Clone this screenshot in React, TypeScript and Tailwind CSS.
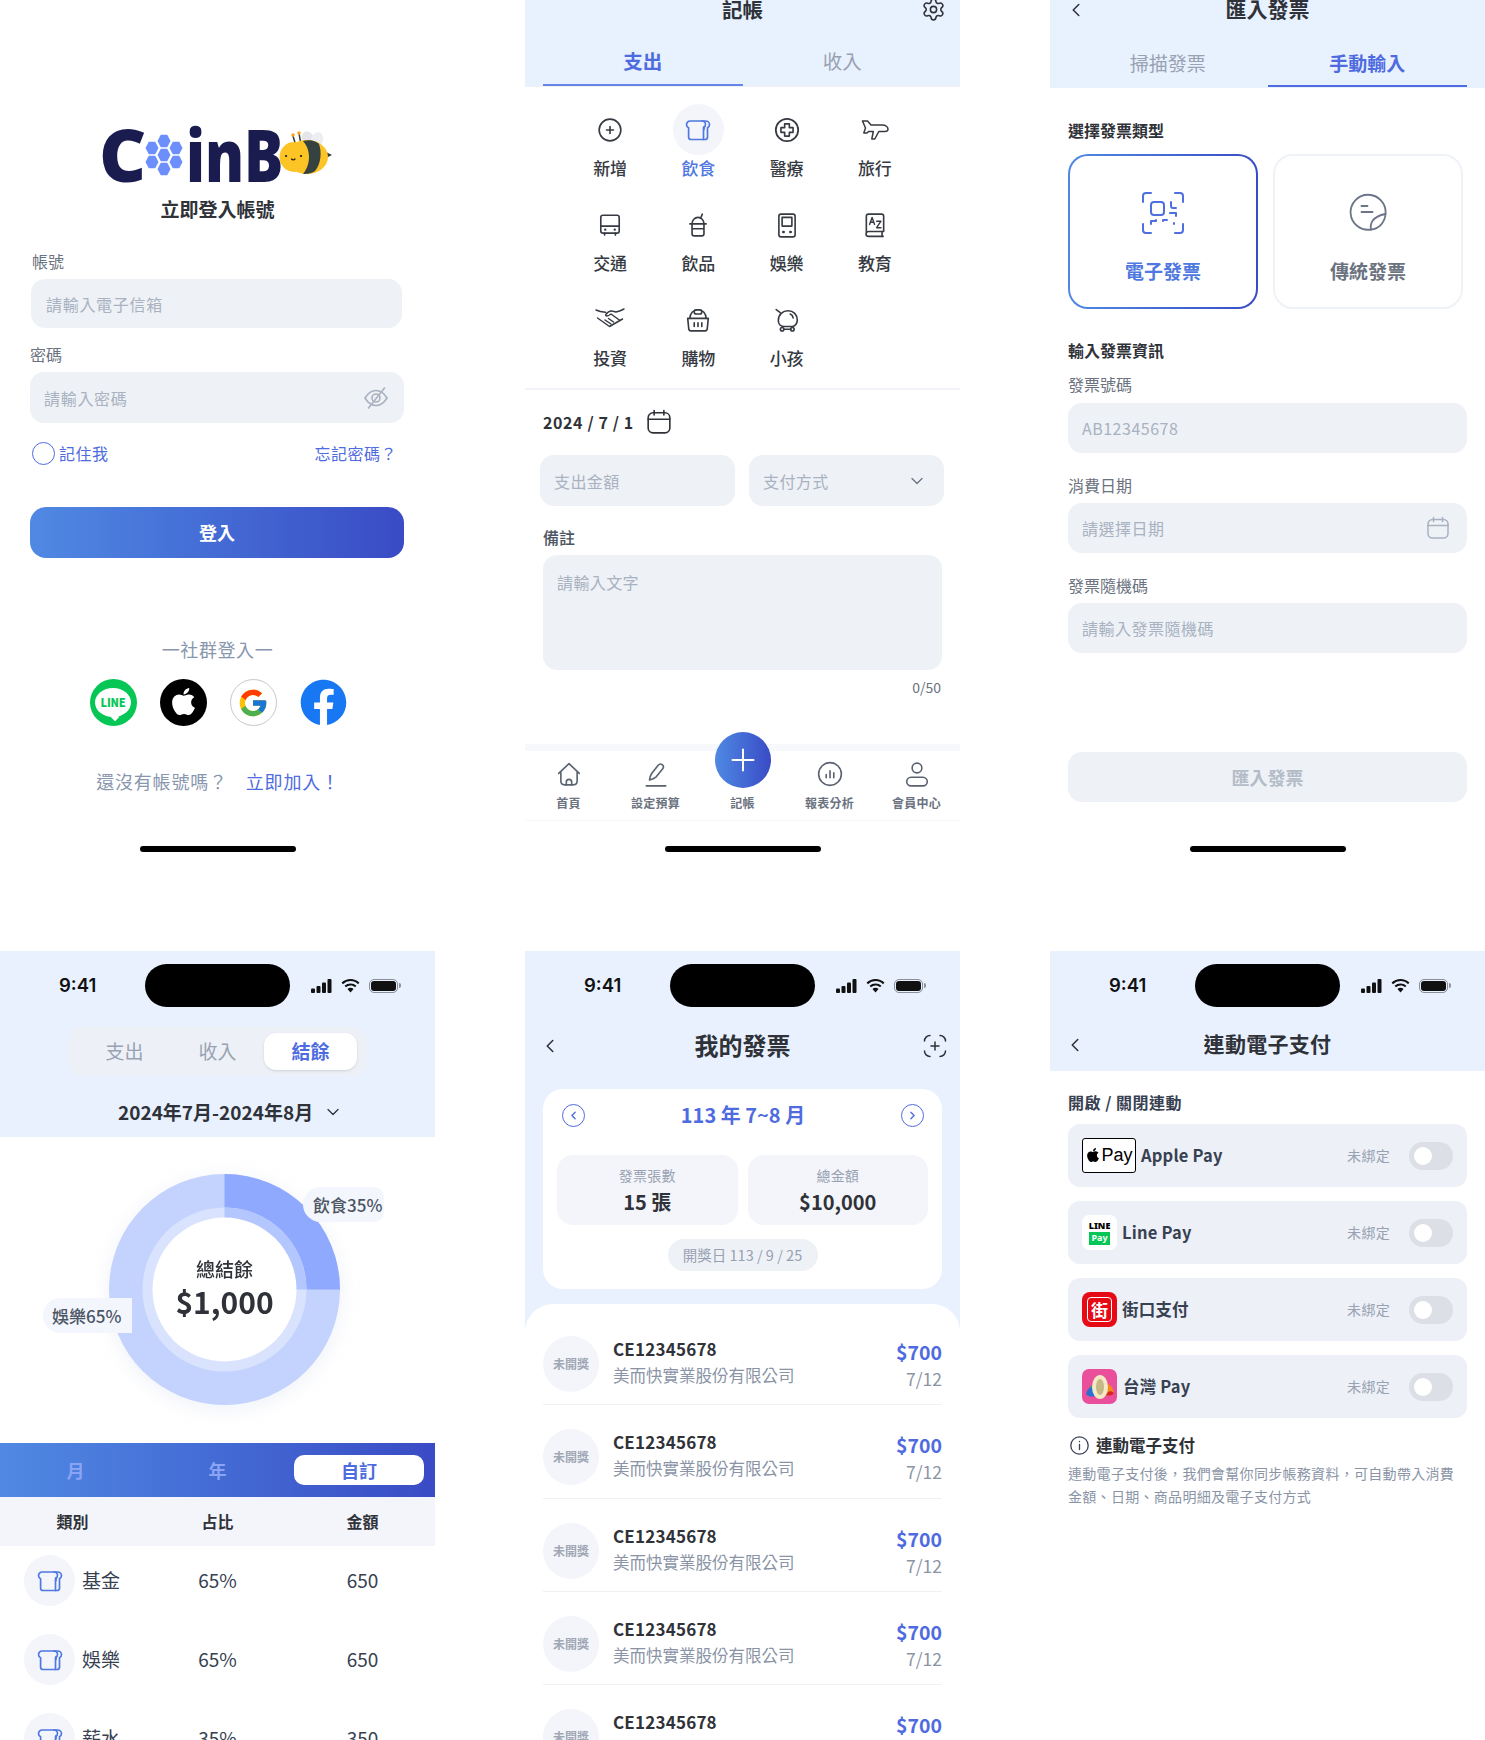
import React from 'react';
import { ChevronDown, ChevronLeft, ChevronRight, Settings } from 'lucide-react';
import { FaApple, FaFacebook } from 'react-icons/fa';
import { FcGoogle } from 'react-icons/fc';

type IconProps = { className?: string };

const Stroke = ({ size = 24, children, className }: { size?: number; children: React.ReactNode; className?: string }) => (
  <svg width={size} height={size} viewBox="0 0 24 24" fill="none" stroke="currentColor" strokeWidth="1.5" strokeLinecap="round" strokeLinejoin="round" className={className}>
    {children}
  </svg>
);

const Bread = ({ className }: IconProps) => (
  <svg width="26" height="24" viewBox="0 0 26 24" fill="none" stroke="currentColor" strokeWidth="1.7" strokeLinecap="round" strokeLinejoin="round" className={className}>
    <path d="M6 21.5h12.5V9.8c1.3-.6 2-1.8 2-3.2 0-2-1.5-3.6-3.6-3.6H5.2C3 3 1.5 4.6 1.5 6.6c0 1.4.8 2.6 2.1 3.2V19c0 1.5 1 2.5 2.4 2.5z" />
    <path d="M16.9 3h3.7c2.2 0 3.9 1.6 3.9 3.6 0 1.4-.8 2.6-2 3.2V19c0 1.5-1 2.5-2.4 2.5h-1.6" />
    <path d="M19 8.5v3" />
  </svg>
);

const categoryIcons: Record<string, React.ReactNode> = {
  新增: (
    <Stroke size={26}>
      <circle cx="12" cy="12" r="10" />
      <path d="M12 8.8v6.4M8.8 12h6.4" />
    </Stroke>
  ),
  飲食: <Bread />,
  醫療: (
    <Stroke size={28}>
      <circle cx="12" cy="12" r="9.6" />
      <path d="M10 6.8h4v3.2h3.2v4H14v3.2h-4V14H6.8v-4H10z" strokeWidth="1.4" />
    </Stroke>
  ),
  旅行: (
    <svg width="28" height="22" viewBox="0 0 28 22" fill="none" stroke="currentColor" strokeWidth="1.5" strokeLinejoin="round">
      <path d="M1.5 2h5l3.5 4h11.5c3 0 5.5 2 5.5 4.2 0 1.600-1.400 2.300-3.200 2.300h-6l-4 7.500h-3l1.500-7.500H7.500L6 14H2.800L4.500 9z" />
    </svg>
  ),
  交通: (
    <Stroke size={26}>
      <rect x="3.5" y="3" width="17" height="16.5" rx="2" />
      <path d="M3.500 13h17M7 19.500v1.800M17 19.500v1.800" />
      <path d="M7.500 16.300h.2M16.300 16.300h.2" strokeWidth="2" />
    </Stroke>
  ),
  飲品: (
    <Stroke size={26}>
      <path d="M14.500 5.500 16 2M6.500 11c0-3.500 2.500-6 5.500-6s5.500 2.500 5.500 6M4.500 11h15M6.500 11v9c0 1 .8 2 2 2h7c1.200 0 2-1 2-2v-9M6.500 15.500h11" />
    </Stroke>
  ),
  娛樂: (
    <Stroke size={26}>
      <rect x="4.500" y="2" width="15" height="21" rx="2" />
      <rect x="7.500" y="5" width="9" height="8" />
      <path d="M8.500 18.500h.5M15 18.500h.5" strokeWidth="2.200" />
    </Stroke>
  ),
  教育: (
    <svg width="26" height="26" viewBox="0 0 24 24" fill="none" stroke="currentColor" strokeWidth="1.500" strokeLinecap="round" strokeLinejoin="round">
      <path d="M4 19.500V4a2 2 0 0 1 2-2h12a2 2 0 0 1 2 2v14H6a2 2 0 0 0 0 4.500h13.500" />
      <path d="M7 11.500l2.300-6.500 2.300 6.500M8 9.500h2.600M13.500 8.500h4l-4 6h4" strokeWidth="1.300" />
      <path d="M18.500 18v4.500" />
    </svg>
  ),
  投資: (
    <svg width="30" height="26" viewBox="0 0 30 26" fill="none" stroke="currentColor" strokeWidth="1.500" strokeLinecap="round" strokeLinejoin="round">
      <path d="M1 3c3 1.500 6 2 9.500 2.200M29 2c-3 1.500-5.500 2.500-8 3l-3-.8c-2.500-.8-5 .3-7 3-.6 1-.2 1.800 1 1.800 1.300 0 2.700-1 4-2l9 6.500" />
      <path d="M2.500 11l12 8.500L27.500 12" />
      <path d="M10 13l6 4M13.500 11.500l5 3.500" />
    </svg>
  ),
  購物: (
    <svg width="26" height="26" viewBox="0 0 24 24" fill="none" stroke="currentColor" strokeWidth="1.500" strokeLinecap="round" strokeLinejoin="round">
      <path d="M2.500 10.500h19l-1 10a2 2 0 0 1-2 1.500h-13a2 2 0 0 1-2-1.500z" />
      <path d="M4.500 10.500C4.500 6 7.500 2.500 12 2.500s7.500 3.500 7.500 8" />
      <rect x="8.500" y="2.500" width="7" height="4" rx="2" />
      <path d="M8.500 14.500v3.500M12 14.500v3.500M15.500 14.500v3.500" />
    </svg>
  ),
  小孩: (
    <svg width="26" height="26" viewBox="0 0 24 24" fill="none" stroke="currentColor" strokeWidth="1.500" strokeLinecap="round" strokeLinejoin="round">
      <path d="M2 2.500l3.500 2.500M4 12.500C4 7 8 3.500 13 3.500s8.500 3.500 8.500 8.500c0 3-2 6-4.800 6H9c-3 0-5-2.500-5-5.500z" />
      <path d="M15 6.500c1.500.6 2.500 2 2.700 3.500" />
      <circle cx="7.500" cy="20.500" r="1.600" />
      <circle cx="17" cy="20.500" r="1.600" />
      <path d="M9 20.500h6.500" />
    </svg>
  ),
};

const categories = ['新增', '飲食', '醫療', '旅行', '交通', '飲品', '娛樂', '教育', '投資', '購物', '小孩'];

const HomeBar = () => <div className="mt-auto mb-[9px] mx-auto h-[6px] w-[156px] shrink-0 rounded-full bg-black" />;

const CalendarIcon = ({ className, size = 24 }: IconProps & { size?: number }) => (
  <svg width={size} height={size} viewBox="0 0 24 24" fill="none" stroke="currentColor" strokeWidth="1.500" strokeLinecap="round" strokeLinejoin="round" className={className}>
    <rect x="2" y="3.500" width="20" height="18.500" rx="4.500" />
    <path d="M2 9.500h20M7.500 1.500v4M16.500 1.500v4" />
  </svg>
);

const StatusBar = () => (
  <div className="flex h-[56px] shrink-0 items-start pt-[13px] pl-[59px]">
    <span className="flex h-[43px] w-[86px] items-center font-['Inter',sans-serif] text-[18.500px] font-semibold text-[#111]">9:41</span>
    <div className="h-[43px] w-[145px] rounded-full bg-black" />
    <div className="ml-[21px] flex h-[43px] items-center gap-[8px]">
      <svg width="21" height="14" viewBox="0 0 21 14" fill="#111">
        <rect x="0" y="9.500" width="4" height="4.500" rx="1" />
        <rect x="5.500" y="7" width="4" height="7" rx="1" />
        <rect x="11" y="3.500" width="4" height="10.500" rx="1" />
        <rect x="16.500" y="0" width="4" height="14" rx="1" />
      </svg>
      <svg width="21" height="15" viewBox="0 0 20 14" fill="#111">
        <path d="M10 2.800c2.800 0 5.300 1.100 7.200 2.900l1.300-1.500A12.300 12.300 0 0 0 10 .8 12.300 12.300 0 0 0 1.500 4.200l1.300 1.500A10.400 10.400 0 0 1 10 2.800z" />
        <path d="M10 7c1.700 0 3.200.6 4.300 1.700l1.400-1.500A8.300 8.300 0 0 0 10 5a8.300 8.300 0 0 0-5.700 2.200l1.400 1.500A6.300 6.300 0 0 1 10 7z" />
        <path d="M10 9.200c-1.100 0-2.100.4-2.900 1.100L10 13.600l2.900-3.300c-.8-.7-1.800-1.100-2.900-1.100z" />
      </svg>
      <div className="flex items-center">
        <div className="flex h-[14px] w-[29px] items-center justify-center rounded-[5px] border border-[#8a8f98]">
          <div className="h-[10px] w-[25px] rounded-[3px] bg-[#111]" />
        </div>
        <div className="ml-px h-[5px] w-[1.500px] rounded-r bg-[#8a8f98]" />
      </div>
    </div>
  </div>
);

const Logo = () => (
  <div className="flex h-[57px] items-center pl-[99px] font-['Noto_Sans',sans-serif] text-[73px] leading-none font-black text-[#1a1c50]">
    <span className="w-[44px] shrink-0">C</span>
    <svg width="42" height="42" viewBox="0 0 42 42" fill="#6d8ffb" className="mt-[3px] shrink-0">
      {[
        [21, 7],
        [21, 21],
        [21, 35],
        [9, 14],
        [33, 14],
        [9, 28],
        [33, 28],
      ].map(([x, y]) => (
        <polygon key={`${x}-${y}`} points={`${x - 6.500},${y} ${x - 3.250},${y - 6.300} ${x + 3.250},${y - 6.300} ${x + 6.500},${y} ${x + 3.250},${y + 6.300} ${x - 3.250},${y + 6.300}`} />
      ))}
    </svg>
    <span className="ml-[1px] w-[95px] shrink-0 origin-left scale-x-[.8]">inB</span>
    <svg width="54" height="46" viewBox="0 0 54 46" className="mt-[-2px] -ml-[2px] shrink-0">
      <ellipse cx="29" cy="9" rx="6" ry="8" fill="#e4e6ea" transform="rotate(-25 29 9)" />
      <ellipse cx="38" cy="10" rx="6" ry="8" fill="#eceef1" transform="rotate(20 38 10)" />
      <path d="M14 6l3 10M20 3l2 12" stroke="#2f3a3a" strokeWidth="1.500" />
      <circle cx="14" cy="5" r="1.800" fill="#f5a623" />
      <circle cx="20" cy="3" r="1.800" fill="#f5a623" />
      <path d="M47 22l6 3-6 3z" fill="#2f3a3a" />
      <ellipse cx="28" cy="27" rx="21" ry="17" fill="#fdc426" />
      <path d="M24 11c8-2 14 1 16 3 3 8 2 20-4 27-4 3-10 3-12 3 7-8 9-23 0-33z" fill="#364240" />
      <ellipse cx="15" cy="27" rx="14.500" ry="15" fill="#fdc426" />
      <path d="M7 26h.1M22 26h.1" stroke="#222" strokeWidth="2.200" strokeLinecap="round" />
      <path d="M12.500 29c1 1.200 2.500 1.200 3.500 0" stroke="#222" strokeWidth="1.200" fill="none" strokeLinecap="round" />
    </svg>
  </div>
);

const LoginScreen = () => (
  <section className="flex h-[861px] flex-col bg-white pt-[125px]">
    <Logo />
    <h1 className="mt-[13px] h-[28px] text-center text-[19px] leading-[28px] font-bold text-[#2f3238]">立即登入帳號</h1>
    <label className="mt-[26px] ml-[32px] h-[24px] text-[16px] leading-[24px] text-[#6b7280]">帳號</label>
    <div className="mt-[6px] ml-[31px] flex h-[49px] w-[371px] items-center rounded-[14px] bg-[#eef1f6] pl-[15px] text-[16px] tracking-[.7px] text-[#a8b2c1]">請輸入電子信箱</div>
    <label className="mt-[14px] ml-[30px] h-[24px] text-[16px] leading-[24px] text-[#6b7280]">密碼</label>
    <div className="mt-[6px] ml-[30px] flex h-[51px] w-[374px] items-center justify-between rounded-[14px] bg-[#eef1f6] pr-[16px] pl-[14px] text-[16px] tracking-[.7px] text-[#a8b2c1]">
      <span>請輸入密碼</span>
      <svg width="24" height="22" viewBox="0 0 24 22" fill="none" stroke="#a8b2c1" strokeWidth="1.600" strokeLinecap="round">
        <path d="M1 11c3-5 6.500-7.500 11-7.500S20 6 23 11c-3 5-6.500 7.500-11 7.500S4 16 1 11z" />
        <circle cx="12" cy="11" r="4" />
        <path d="M20.500 1 4.500 21" />
      </svg>
    </div>
    <div className="mt-[18px] flex h-[24px] items-center justify-between pr-[38px] pl-[32px] text-[16px] tracking-[.5px] text-[#4f6be0]">
      <div className="flex items-center gap-[4px]">
        <span className="h-[23px] w-[23px] rounded-full border-[1.500px] border-[#4f6be0]" />
        <span>記住我</span>
      </div>
      <span>忘記密碼？</span>
    </div>
    <button className="mt-[42px] ml-[30px] h-[51px] w-[374px] shrink-0 rounded-[16px] bg-linear-to-r from-[#5089e3] to-[#3a4bc5] text-[18px] font-bold text-white">登入</button>
    <p className="mt-[78px] h-[26px] text-center text-[18px] leading-[26px] tracking-[.6px] text-[#8896ae]">一社群登入一</p>
    <div className="mt-[17px] flex justify-center gap-[23px] pl-[1px]">
      <div className="flex h-[47px] w-[47px] items-center justify-center rounded-full bg-[#06c755]">
        <div className="relative flex h-[29px] w-[36px] items-center justify-center rounded-[50%] bg-white text-[11px] font-black tracking-[-.2px] text-[#06c755]">
          LINE
          <div className="absolute -bottom-[3px] left-[17px] h-[6px] w-[6px] rotate-45 bg-white" />
        </div>
      </div>
      <div className="flex h-[47px] w-[47px] items-center justify-center rounded-full bg-black">
        <FaApple size={31} color="#fff" className="-mt-[3px]" />
      </div>
      <div className="flex h-[47px] w-[47px] items-center justify-center rounded-full border border-[#c8c8c8] bg-white">
        <FcGoogle size={32} />
      </div>
      <div className="flex h-[47px] w-[47px] items-center justify-center rounded-full bg-white">
        <FaFacebook size={47} color="#1877f2" />
      </div>
    </div>
    <p className="mt-[42px] flex h-[26px] justify-center gap-[18px] pl-[1px] text-[18px] leading-[26px] tracking-[.8px]">
      <span className="text-[#8896ae]">還沒有帳號嗎？</span>
      <span className="text-[#4f6be0]">立即加入！</span>
    </p>
    <HomeBar />
  </section>
);

const tabItems = [
  {
    label: '首頁',
    icon: (
      <Stroke size={26}>
        <path d="M2.500 11.500 12 2.500l9.500 9M4.500 10v8.500c0 2 1.500 3.500 3.500 3.500h8c2 0 3.500-1.500 3.500-3.500V10" />
        <path d="M9.500 22v-2.500a2.500 2.500 0 0 1 5 0V22" />
      </Stroke>
    ),
  },
  {
    label: '設定預算',
    icon: (
      <Stroke size={26}>
        <path d="M6 17.500c.3-2.500 1-4.500 2-6l6-7.500c1-1.200 2.500-1.500 3.700-.6 1.300 1 1.400 2.500.5 3.700l-6 7.500c-1.500 1.200-3.500 2.200-6.200 2.900z" />
        <path d="M3 23h18" />
      </Stroke>
    ),
  },
  { label: '記帳', icon: <div className="h-[26px]" /> },
  {
    label: '報表分析',
    icon: (
      <Stroke size={26}>
        <circle cx="12" cy="12" r="10.500" />
        <path d="M8.500 12.500v3M12 9v6.500M15.500 11v4.500" />
      </Stroke>
    ),
  },
  {
    label: '會員中心',
    icon: (
      <Stroke size={26}>
        <circle cx="12" cy="6.500" r="4.500" />
        <rect x="2.500" y="15" width="19" height="8" rx="4" />
      </Stroke>
    ),
  },
];

const BookkeepScreen = () => (
  <section className="flex h-[861px] flex-col bg-white">
    <header className="flex h-[87px] shrink-0 flex-col justify-between border-b border-[#eef1f8] bg-[#e8f1fe] px-[18px]">
      <div className="relative -mt-[5px] h-[28px] text-center text-[20.500px] leading-[28px] font-bold text-[#2f3238]">
        記帳
        <Settings size={25} strokeWidth={1.500} className="absolute top-[2px] right-[-4px]" />
      </div>
      <div className="grid h-[44px] w-[399px] grid-cols-2 text-center text-[19.500px] leading-[38px]">
        <span className="h-[44px] border-b-2 border-[#6584e6] font-bold text-[#4f6be0]">支出</span>
        <span className="text-[#98a2b3]">收入</span>
      </div>
    </header>
    <div className="grid grid-cols-4 gap-y-[18px] border-b-2 border-[#f1f3f8] px-[41px] pt-[17px] pb-[17px]">
      {categories.map((name) => {
        const active = name === '飲食';
        return (
          <div key={name} className="flex flex-col items-center">
            <div className={`flex h-[51px] w-[51px] items-center justify-center rounded-full ${active ? 'bg-[#f3f5fa] text-[#4f78e0]' : 'text-[#363a42]'}`}>{categoryIcons[name]}</div>
            <span className={`mt-[1px] h-[25px] text-[17px] leading-[24px] font-medium ${active ? 'text-[#4f78e0]' : 'text-[#363a42]'}`}>{name}</span>
          </div>
        );
      })}
    </div>
    <div className="mt-[20px] flex h-[24px] items-center gap-[12px] pl-[18px] text-[16px] font-bold tracking-[.6px] text-[#2f3238]">
      <span>2024 / 7 / 1</span>
      <CalendarIcon size={26} />
    </div>
    <div className="mt-[21px] ml-[15px] flex gap-[14px] text-[16px] tracking-[.4px] text-[#a8b2c1]">
      <div className="flex h-[51px] w-[195px] items-center rounded-[14px] bg-[#eef1f6] pl-[14px]">支出金額</div>
      <div className="flex h-[51px] w-[195px] items-center justify-between rounded-[14px] bg-[#eef1f6] pr-[17px] pl-[14px]">
        <span>支付方式</span>
        <ChevronDown size={20} strokeWidth={1.500} className="text-[#6b7280]" />
      </div>
    </div>
    <label className="mt-[19px] ml-[18px] h-[24px] text-[16px] leading-[24px] font-medium text-[#4b5563]">備註</label>
    <div className="mt-[6px] ml-[18px] h-[115px] w-[399px] rounded-[14px] bg-[#eef1f6] pt-[15px] pl-[14px] text-[16px] leading-[24px] tracking-[.4px] text-[#a8b2c1]">請輸入文字</div>
    <p className="mt-[7px] h-[20px] pr-[19px] text-right text-[14px] leading-[20px] text-[#6b7280]">0/50</p>
    <div className="mt-[47px] h-[7px] shrink-0 bg-[#f7f8fb]" />
    <nav className="relative grid h-[70px] shrink-0 grid-cols-5 border-b border-[#f7f8fb] bg-white pt-[10px]">
      {tabItems.map(({ label, icon }) => (
        <div key={label} className="flex flex-col items-center text-[#5b6270]">
          <div className="flex h-[26px] items-center">{icon}</div>
          <span className="mt-[8px] h-[16px] text-[12px] leading-[16px] font-bold tracking-[.3px] text-[#6b7280]">{label}</span>
        </div>
      ))}
      <div className="absolute -top-[19px] left-[190px] flex h-[56px] w-[56px] items-center justify-center rounded-full bg-linear-to-r from-[#5089e3] to-[#3a4bc5]">
        <svg width="24" height="24" viewBox="0 0 24 24" stroke="#fff" strokeWidth="2" strokeLinecap="round">
          <path d="M12 1.500v21M1.500 12h21" />
        </svg>
      </div>
    </nav>
    <HomeBar />
  </section>
);

const InvoiceField = ({ label, placeholder, calendar }: { label: string; placeholder: string; calendar?: boolean }) => (
  <>
    <label className="mt-[20px] ml-[18px] h-[24px] text-[16px] leading-[24px] text-[#6b7280]">{label}</label>
    <div className="mt-[6px] ml-[18px] flex h-[50px] w-[399px] items-center justify-between rounded-[14px] bg-[#eef1f6] pr-[17px] pl-[14px] text-[16px] tracking-[.5px] text-[#a8b2c1]">
      <span>{placeholder}</span>
      {calendar && <CalendarIcon className="text-[#a8b2c1]" />}
    </div>
  </>
);

const ImportScreen = () => (
  <section className="flex h-[861px] flex-col bg-white">
    <header className="flex h-[88px] shrink-0 flex-col justify-between bg-[#e8f1fe] pl-[18px]">
      <div className="relative -mt-[8px] h-[32px] pr-[18px] text-center text-[21px] leading-[32px] font-bold text-[#2f3238]">
        匯入發票
        <ChevronLeft size={22} strokeWidth={1.700} className="absolute top-[7px] -left-[3px] text-[#2f3238]" />
      </div>
      <div className="grid h-[44px] w-[399px] grid-cols-2 text-center text-[19px] leading-[38px]">
        <span className="text-[#98a2b3]">掃描發票</span>
        <span className="h-[43px] border-b-2 border-[#4f6be0] font-bold text-[#4f6be0]">手動輸入</span>
      </div>
    </header>
    <h2 className="mt-[30px] ml-[18px] h-[24px] text-[16px] leading-[24px] font-bold text-[#2f3238]">選擇發票類型</h2>
    <div className="mt-[12px] ml-[18px] flex gap-[15px]">
      <div className="h-[155px] w-[190px] rounded-[20px] bg-linear-to-r from-[#5089e3] to-[#3a4bc5] p-[2px]">
        <div className="flex h-full flex-col items-center rounded-[18px] bg-white pt-[35px] text-[#4f6fe0]">
          <svg width="44" height="44" viewBox="0 0 44 44" fill="none" stroke="currentColor" strokeWidth="2" strokeLinecap="round" strokeLinejoin="round">
            <path d="M2 11V5a3 3 0 0 1 3-3h5M34 2h5a3 3 0 0 1 3 3v6M42 33v6a3 3 0 0 1-3 3h-5M10 42H5a3 3 0 0 1-3-3v-6" />
            <rect x="10" y="11" width="13" height="13" rx="3" />
            <path d="M30 11v4a2 2 0 0 0 2 2h3M29 22h6v3M10 33v-3h5l0-1M22 30v-1h4M33 33v-1" />
          </svg>
          <span className="mt-[23px] text-[19px] leading-[26px] font-bold text-[#4f78e0]">電子發票</span>
        </div>
      </div>
      <div className="flex h-[155px] w-[190px] flex-col items-center rounded-[20px] border-2 border-[#eff2f7] bg-white pt-[37px] text-[#6b7488]">
        <svg width="38" height="38" viewBox="0 0 38 38" fill="none" stroke="currentColor" strokeWidth="1.800" strokeLinecap="round" strokeLinejoin="round">
          <path d="M22 36.500A17.500 17.500 0 1 1 36.500 21C36 29 30 36 22 36.500z" />
          <path d="M22 36.500c-1-5 .5-13 14.500-15.500M12.500 13h6M12.500 19h11" />
        </svg>
        <span className="mt-[27px] text-[19px] leading-[26px] font-bold text-[#6b7280]">傳統發票</span>
      </div>
    </div>
    <h2 className="mt-[29px] ml-[18px] h-[24px] text-[16px] leading-[24px] font-bold text-[#2f3238]">輸入發票資訊</h2>
    <label className="mt-[10px] ml-[18px] h-[24px] text-[16px] leading-[24px] text-[#6b7280]">發票號碼</label>
    <div className="mt-[7px] ml-[18px] flex h-[50px] w-[399px] items-center rounded-[14px] bg-[#eef1f6] pl-[14px] text-[16px] tracking-[.5px] text-[#a8b2c1]">AB12345678</div>
    <InvoiceField label="消費日期" placeholder="請選擇日期" calendar />
    <InvoiceField label="發票隨機碼" placeholder="請輸入發票隨機碼" />
    <button className="mt-[99px] ml-[18px] h-[50px] w-[399px] shrink-0 rounded-[14px] bg-[#eef1f6] text-[18px] font-bold text-[#b4bcc8]">匯入發票</button>
    <HomeBar />
  </section>
);

const Donut = () => (
  <svg width="231" height="231" viewBox="0 0 231 231">
    <circle cx="115.500" cy="115.500" r="115.500" fill="#c4d3fe" />
    <path d="M115.500 115.500V0A115.500 115.500 0 0 1 231 115.500z" fill="#8fa9fe" />
    <circle cx="115.500" cy="115.500" r="82" fill="#d9e3fe" />
    <path d="M115.500 115.500V33.500A82 82 0 0 1 197.500 115.500z" fill="#b4c6fe" />
    <circle cx="115.500" cy="115.500" r="72" fill="#fff" />
  </svg>
);

const reportRows = [
  { name: '基金', pct: '65%', amount: '650' },
  { name: '娛樂', pct: '65%', amount: '650' },
  { name: '薪水', pct: '35%', amount: '350' },
];

const ReportScreen = () => (
  <section className="flex h-[789px] flex-col overflow-hidden bg-white">
    <header className="h-[186px] shrink-0 bg-[#e9f1ff]">
      <StatusBar />
      <div className="mt-[20px] ml-[69px] flex h-[49px] w-[298px] items-center rounded-[14px] bg-[#edf1f7] pl-[9px] text-center text-[19px] text-[#98a2b3]">
        <span className="w-[93px]">支出</span>
        <span className="w-[93px]">收入</span>
        <span className="h-[37px] w-[93px] rounded-[12px] bg-white leading-[36px] font-bold text-[#4f6be0] shadow-sm">結餘</span>
      </div>
      <div className="mt-[23px] flex h-[26px] items-center gap-[10px] pl-[118px] text-[19px] font-semibold text-[#2f3238]">
        <span>2024年7月-2024年8月</span>
        <ChevronDown size={20} strokeWidth={1.500} />
      </div>
    </header>
    <div className="relative h-[306px] shrink-0 pt-[37px] pl-[109px]">
      <div className="relative h-[231px] w-[231px] drop-shadow-[0_4px_10px_rgba(120,140,200,.12)]">
        <Donut />
        <div className="absolute inset-0 flex flex-col items-center justify-center text-[#2f3238]">
          <span className="-mt-[2px] text-[19px] leading-[26px] font-medium">總結餘</span>
          <span className="-mt-[1px] text-[30px] leading-[40px] font-bold">$1,000</span>
        </div>
      </div>
      <span className="absolute top-[50px] left-[303px] flex h-[35px] w-[81px] items-center rounded-l-[18px] rounded-r-[10px] bg-[#f3f6fd] pl-[10px] text-[17px] font-medium text-[#4b5563]">飲食35%</span>
      <span className="absolute top-[161px] left-[43px] flex h-[35px] w-[89px] items-center rounded-l-[18px] bg-[#f3f6fd] pl-[9px] text-[17px] font-medium text-[#4b5563]">娛樂65%</span>
    </div>
    <div className="grid h-[54px] shrink-0 grid-cols-3 items-center bg-linear-to-r from-[#5089e3] to-[#3a4bc5] text-center text-[18px] font-bold text-[#8aa4f3]">
      <span className="pl-[6px]">月</span>
      <span>年</span>
      <span className="ml-[4px] h-[30px] w-[130px] rounded-[10px] bg-white leading-[30px] text-[#4f6be0]">自訂</span>
    </div>
    <div className="grid h-[49px] shrink-0 grid-cols-3 items-center bg-[#f3f5fa] pb-[2px] text-center text-[16px] font-bold text-[#2f3238]">
      <span>類別</span>
      <span>占比</span>
      <span>金額</span>
    </div>
    <div className="flex flex-col gap-[28px] pt-[9px]">
      {reportRows.map((row) => (
        <div key={row.name} className="grid h-[51px] shrink-0 grid-cols-3 items-center text-center text-[19px] text-[#374151]">
          <div className="flex items-center gap-[7px] pl-[24px]">
            <div className="flex h-[51px] w-[51px] items-center justify-center rounded-full bg-[#f3f5fa] text-[#4f78e0]">
              <Bread />
            </div>
            <span>{row.name}</span>
          </div>
          <span>{row.pct}</span>
          <span>{row.amount}</span>
        </div>
      ))}
    </div>
  </section>
);

const InvoiceScreen = () => (
  <section className="flex h-[789px] flex-col overflow-hidden bg-[#e9f1ff]">
    <StatusBar />
    <div className="relative mt-[18px] mb-[2px] h-[40px] shrink-0 text-center text-[24px] leading-[40px] font-bold text-[#2f3238]">
      我的發票
      <ChevronLeft size={22} strokeWidth={1.700} className="absolute top-[10px] left-[14px]" />
      <svg width="24" height="24" viewBox="0 0 24 24" fill="none" stroke="#2f3238" strokeWidth="1.500" strokeLinecap="round" className="absolute top-[9px] right-[13px]">
        <path d="M1.500 7A5.500 5.500 0 0 1 7 1.500M17 1.500A5.500 5.500 0 0 1 22.500 7M22.500 17a5.500 5.500 0 0 1-5.500 5.500M7 22.500A5.500 5.500 0 0 1 1.500 17M12 8v8M8 12h8" />
      </svg>
    </div>
    <div className="mt-[22px] ml-[18px] h-[200px] w-[399px] shrink-0 rounded-[20px] bg-white px-[14px] pt-[14px]">
      <div className="flex h-[24px] items-center justify-between pr-[4px] pl-[5px] text-[#4f6be0]">
        <div className="flex h-[23px] w-[23px] items-center justify-center rounded-full border-[1.500px] border-[#4f6be0]">
          <ChevronLeft size={13} strokeWidth={2.500} />
        </div>
        <span className="text-[20px] leading-[24px] font-bold">113 年 7~8 月</span>
        <div className="flex h-[23px] w-[23px] items-center justify-center rounded-full border-[1.500px] border-[#4f6be0]">
          <ChevronRight size={13} strokeWidth={2.500} />
        </div>
      </div>
      <div className="mt-[28px] flex gap-[10px]">
        <div className="flex h-[70px] w-[181px] flex-col items-center rounded-[16px] bg-[#f3f5fa] pt-[10px]">
          <span className="text-[14px] leading-[20px] tracking-[.2px] text-[#98a2b3]">發票張數</span>
          <span className="mt-[3px] text-[20px] leading-[28px] font-bold text-[#2f3238]">15 張</span>
        </div>
        <div className="flex h-[70px] w-[181px] flex-col items-center rounded-[16px] bg-[#f3f5fa] pt-[10px]">
          <span className="text-[14px] leading-[20px] tracking-[.2px] text-[#98a2b3]">總金額</span>
          <span className="mt-[3px] text-[20px] leading-[28px] font-bold text-[#2f3238]">$10,000</span>
        </div>
      </div>
      <div className="mx-auto mt-[14px] h-[32px] w-[150px] rounded-full bg-[#eef1f6] text-center text-[14.500px] leading-[32px] text-[#98a2b3]">開獎日 113 / 9 / 25</div>
    </div>
    <div className="mt-[15px] flex-1 rounded-t-[28px] bg-white px-[18px] pt-[8px]">
      {[0, 1, 2, 3, 4].map((i) => (
        <div key={i} className="flex h-[93.300px] items-start border-b border-[#eef0f4] pt-[24px]">
          <div className="flex h-[56px] w-[56px] shrink-0 items-center justify-center rounded-full bg-[#f3f5fa] text-[12px] font-bold text-[#a0a8b5]">未開獎</div>
          <div className="mt-[1px] ml-[14px] flex-1">
            <p className="h-[24px] text-[17px] leading-[24px] font-bold tracking-[.2px] text-[#2f3238]">CE12345678</p>
            <p className="mt-[2px] h-[24px] text-[16.500px] leading-[24px] text-[#8a94a6]">美而快實業股份有限公司</p>
          </div>
          <div className="mt-[3px] text-right">
            <p className="h-[26px] text-[19.500px] leading-[26px] font-bold text-[#4f6be0]">$700</p>
            <p className="mt-[2px] h-[24px] text-[17.500px] leading-[24px] text-[#8a94a6]">7/12</p>
          </div>
        </div>
      ))}
    </div>
  </section>
);

const payments: { name: string; icon: React.ReactNode; gap: string }[] = [
  {
    name: 'Apple Pay',
    gap: 'ml-[5px]',
    icon: (
      <div className="flex h-[35px] w-[54px] items-center justify-center rounded-[3px] border border-black bg-white font-['Liberation_Sans',sans-serif] text-[18px] text-black">
        <FaApple size={16} className="-mt-[2px]" />
        <span>Pay</span>
      </div>
    ),
  },
  {
    name: 'Line Pay',
    gap: 'ml-[5px]',
    icon: (
      <div className="flex h-[35px] w-[35px] flex-col items-center justify-center rounded-[7px] bg-white font-['Noto_Sans',sans-serif]">
        <span className="text-[9px] leading-[10px] font-black text-black">LINE</span>
        <span className="mt-[1px] flex h-[13px] w-[21px] items-center justify-center bg-[#06c755] text-[9px] font-bold text-white">Pay</span>
      </div>
    ),
  },
  {
    name: '街口支付',
    gap: 'ml-[5px]',
    icon: (
      <div className="flex h-[35px] w-[35px] items-center justify-center rounded-[8px] bg-[#e60a14]">
        <div className="flex h-[25px] w-[25px] items-center justify-center rounded-[4px] border-[1.500px] border-white text-[17px] leading-none font-bold text-white">街</div>
      </div>
    ),
  },
  {
    name: '台灣 Pay',
    gap: 'ml-[6px]',
    icon: (
      <div className="flex h-[35px] w-[35px] items-center justify-center rounded-[7px] bg-[#ea4f9c]">
        <svg width="30" height="28" viewBox="0 0 30 28">
          <path d="M1 21c1-5 5-9 10-9v11C7 24 3 24 1 21z" fill="#2b6fd0" />
          <path d="M5 15c1-3 3-4 6-5v4c-2 0-4 0-6 1z" fill="#3aa35c" />
          <path d="M19 10c5 0 9 4 10 10-3 3-6 3-10 2z" fill="#f28a1e" />
          <path d="M23 19c2-1 4-1 6 1-2 3-5 3-8 2z" fill="#d8232a" />
          <ellipse cx="15" cy="14" rx="8" ry="12" fill="#f3e9c6" />
          <ellipse cx="15" cy="14" rx="4" ry="8" fill="#c7b987" />
        </svg>
      </div>
    ),
  },
];

const PaymentScreen = () => (
  <section className="flex h-[789px] flex-col bg-white">
    <header className="h-[120px] shrink-0 bg-[#e9f1ff]">
      <StatusBar />
      <div className="relative mt-[18px] h-[36px] text-center text-[21px] leading-[36px] font-bold tracking-[.3px] text-[#2f3238]">
        連動電子支付
        <ChevronLeft size={22} strokeWidth={1.700} className="absolute top-[9px] left-[14px]" />
      </div>
    </header>
    <h2 className="mt-[19px] ml-[18px] h-[24px] text-[16px] leading-[24px] font-bold tracking-[.5px] text-[#374151]">開啟 / 關閉連動</h2>
    <div className="mt-[10px] ml-[18px] flex w-[399px] flex-col gap-[14px]">
      {payments.map(({ name, icon, gap }) => (
        <div key={name} className="flex h-[63px] items-center rounded-[12px] bg-[#edf0f6] pr-[14px] pl-[14px]">
          {icon}
          <span className={`${gap} text-[16.500px] font-bold tracking-[.2px] text-[#374151]`}>{name}</span>
          <span className="mr-[19px] ml-auto text-[14px] tracking-[.3px] text-[#98a2b3]">未綁定</span>
          <div className="flex h-[28px] w-[44px] items-center rounded-full bg-[#dcdfe5] pl-[5px]">
            <div className="h-[18px] w-[18px] rounded-full bg-white" />
          </div>
        </div>
      ))}
    </div>
    <div className="mt-[15px] ml-[20px] flex h-[24px] items-center gap-[7px] text-[16.500px] font-bold text-[#2f3238]">
      <svg width="19" height="19" viewBox="0 0 19 19" fill="none" stroke="#3a4158" strokeWidth="1.300" strokeLinecap="round">
        <circle cx="9.500" cy="9.500" r="8.700" />
        <path d="M9.500 8.500v5M9.500 5.500v.2" />
      </svg>
      <span>連動電子支付</span>
    </div>
    <p className="mt-[5px] ml-[18px] w-[395px] text-[14px] leading-[23px] tracking-[.3px] text-[#8a94a6]">連動電子支付後，我們會幫你同步帳務資料，可自動帶入消費金額、日期、商品明細及電子支付方式</p>
  </section>
);

export default function App() {
  return (
    <div className="grid h-[1740px] w-[1485px] grid-cols-[435px_435px_435px] grid-rows-[861px_789px] gap-x-[90px] gap-y-[90px] overflow-hidden bg-white font-['Noto_Sans_CJK_TC','Noto_Sans',sans-serif]">
      <LoginScreen />
      <BookkeepScreen />
      <ImportScreen />
      <ReportScreen />
      <InvoiceScreen />
      <PaymentScreen />
    </div>
  );
}
